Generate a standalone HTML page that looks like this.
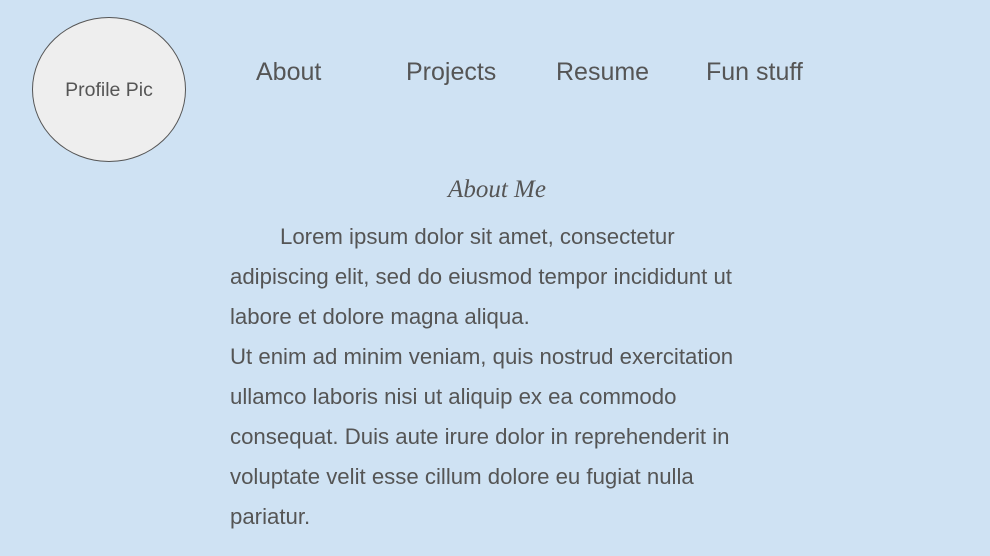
<!DOCTYPE html>
<html><head><style>
body{margin:0;background:#cfe2f3;width:990px;height:556px;overflow:hidden;font-family:"Liberation Sans",sans-serif;color:#555;position:relative}
.pic{position:absolute;left:32px;top:17px;width:152px;height:143px;border:1px solid #555;border-radius:50%;background:#eee;display:flex;align-items:center;justify-content:center;font-size:19.5px}
.pic span{position:relative;top:1px}
.nav{position:absolute;top:58px;font-size:25px;line-height:28px}
h2{position:absolute;left:0;width:994px;top:175px;margin:0;text-align:center;font:italic 25px "Liberation Serif",serif;line-height:30px}
.txt{position:absolute;left:230px;top:217px;width:560px;font-size:22.2px;line-height:40px}
.txt p{margin:0}
</style></head><body>
<div class="pic"><span>Profile Pic</span></div>
<div class="nav" style="left:256px">About</div>
<div class="nav" style="left:406px">Projects</div>
<div class="nav" style="left:556px">Resume</div>
<div class="nav" style="left:706px">Fun stuff</div>
<h2>About Me</h2>
<div class="txt">
<p style="text-indent:50px">Lorem ipsum dolor sit amet, consectetur<br>adipiscing elit, sed do eiusmod tempor incididunt ut<br>labore et dolore magna aliqua.</p>
<p>Ut enim ad minim veniam, quis nostrud exercitation<br>ullamco laboris nisi ut aliquip ex ea commodo<br>consequat. Duis aute irure dolor in reprehenderit in<br>voluptate velit esse cillum dolore eu fugiat nulla<br>pariatur.</p>
</div>
</body></html>
